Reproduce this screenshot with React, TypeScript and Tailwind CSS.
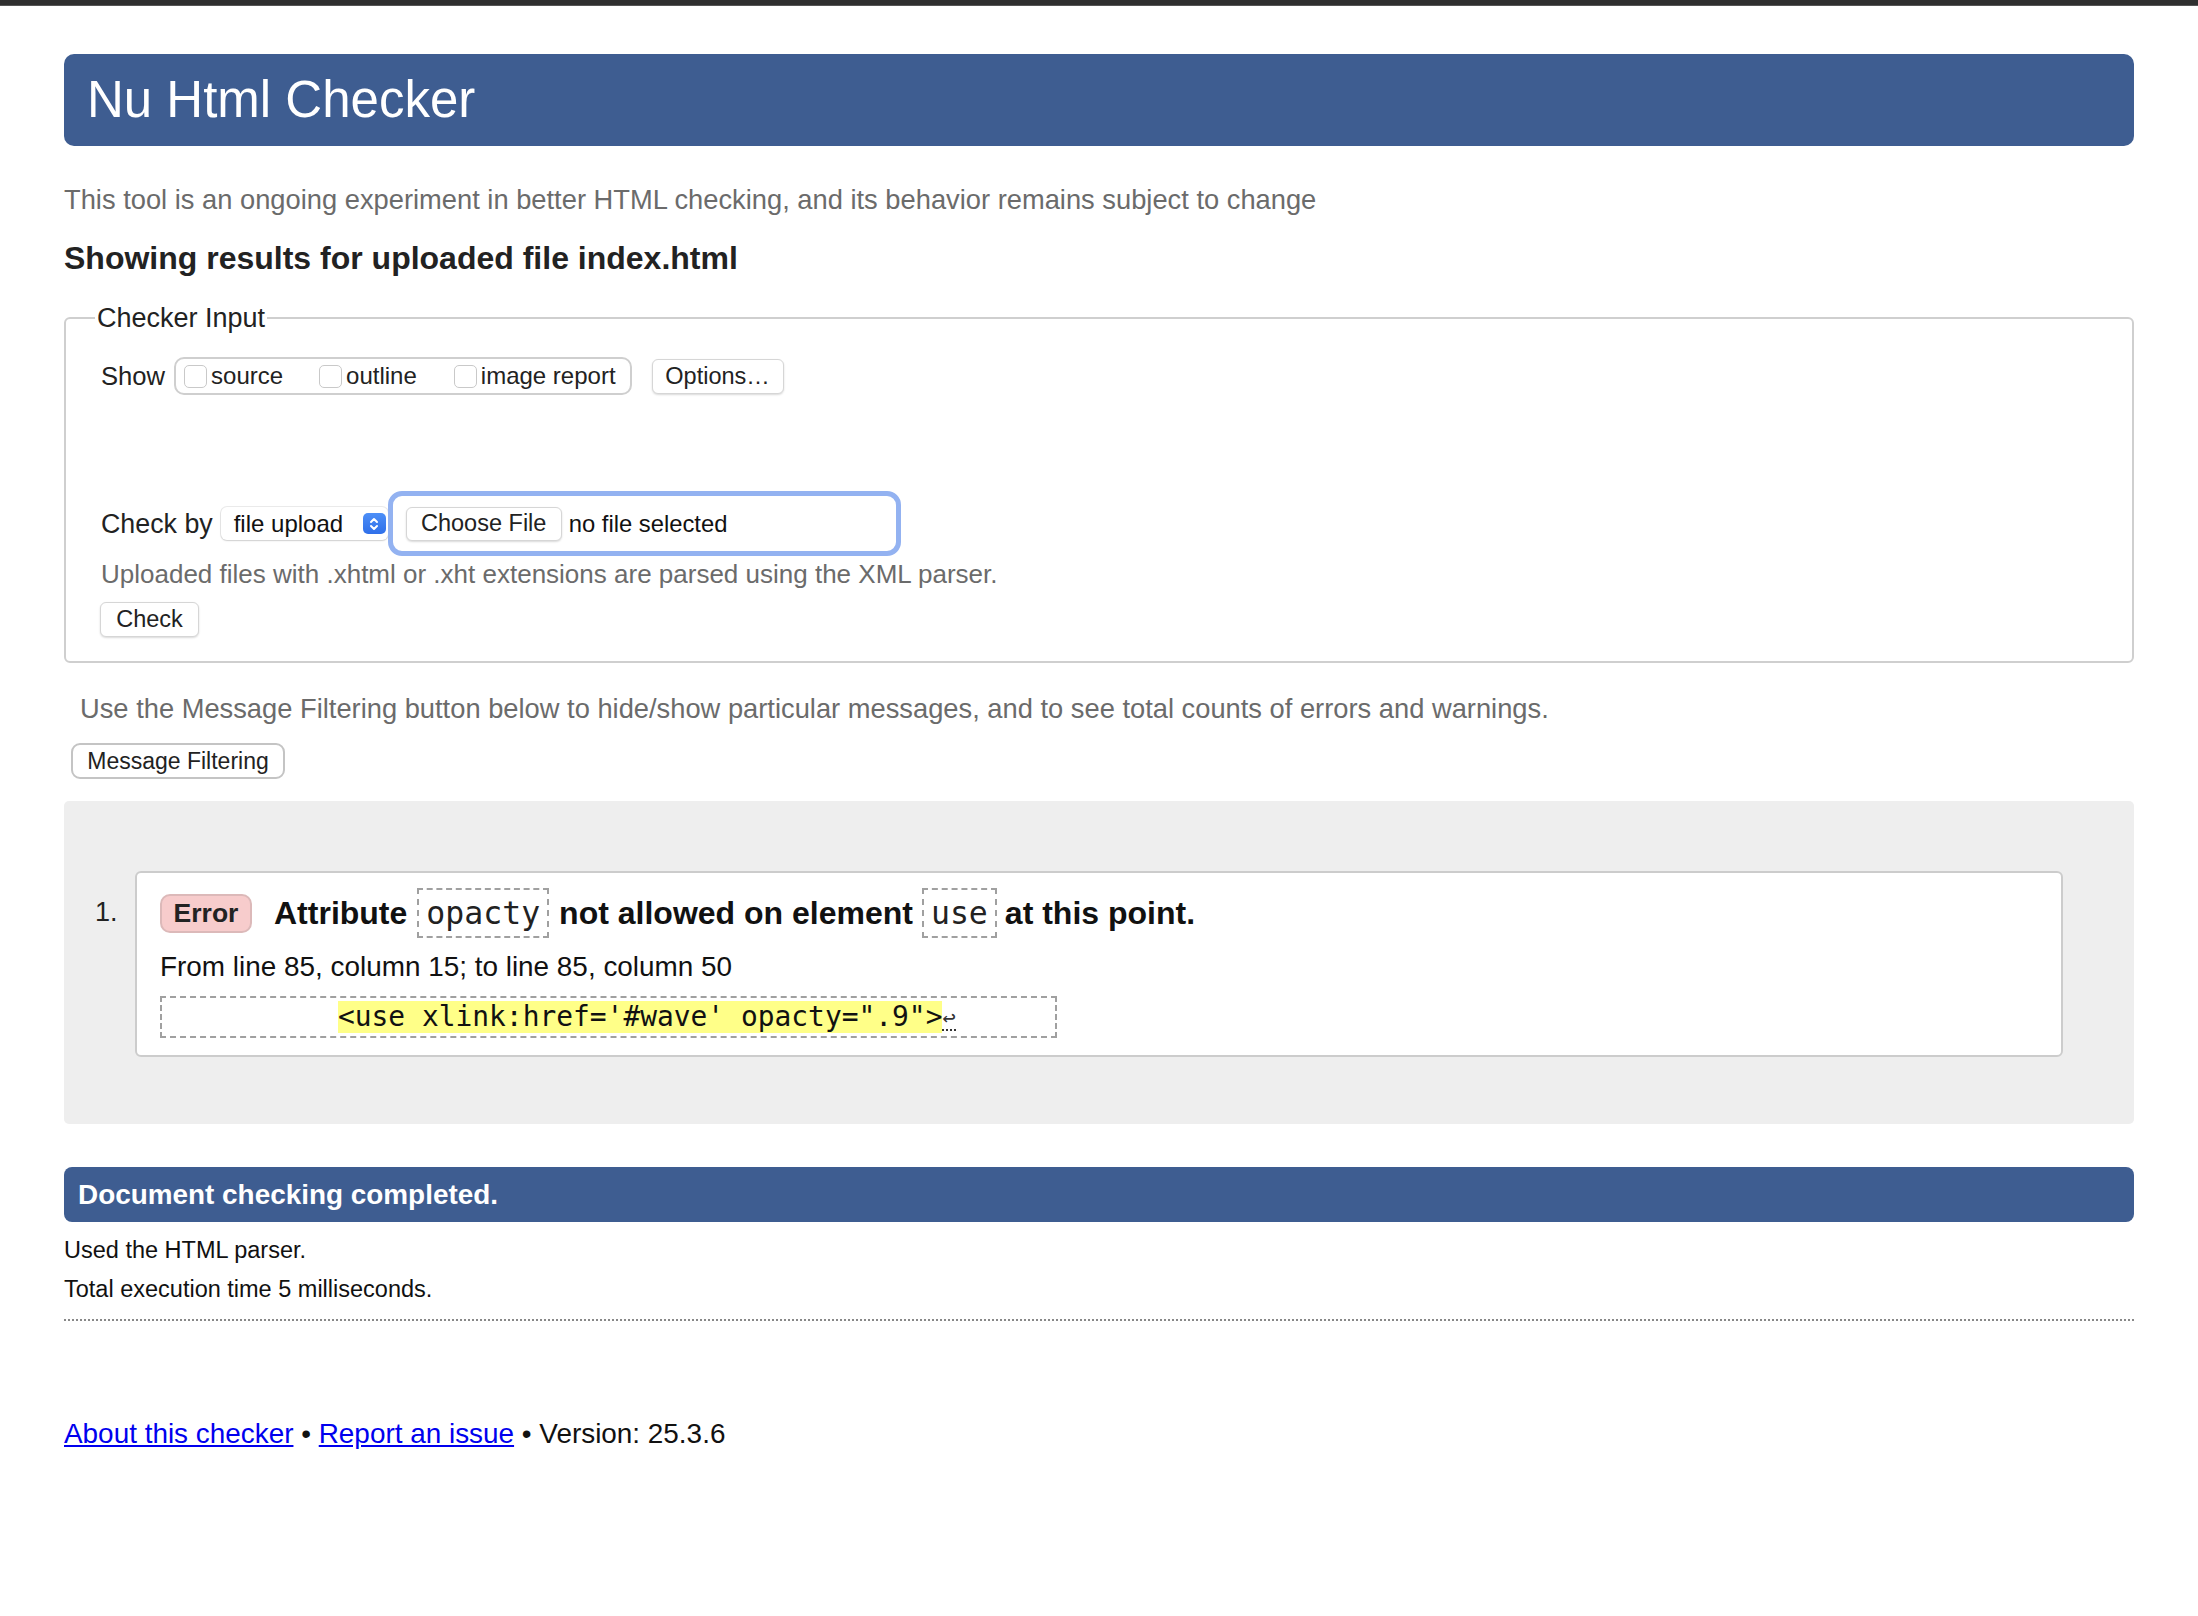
import React from "react";

const SANS = "font-['Liberation_Sans','Helvetica_Neue',Arial,sans-serif]";
const MONO = "font-['DejaVu_Sans_Mono','Liberation_Mono',monospace]";

function Checkbox({ label }: { label: string }) {
  return (
    <label className="flex items-center">
      <span className="h-[23px] w-[23px] rounded-[5px] border-[1.5px] border-[#c9c9c9] bg-white" />
      <span className="ml-[4px] text-[24px] text-[#222]">{label}</span>
    </label>
  );
}

function Btn({ children, className = "" }: { children: React.ReactNode; className?: string }) {
  return (
    <button
      className={
        "flex items-center justify-center rounded-[6px] border border-[#d6d6d6] bg-white text-[23.5px] text-[#222] shadow-[0_1px_2px_rgba(0,0,0,0.15)] " +
        className
      }
    >
      {children}
    </button>
  );
}

function Code({ children }: { children: React.ReactNode }) {
  return (
    <code
      className={
        MONO +
        " inline-flex h-[50px] items-center border-2 border-dashed border-[#a0a0a0] px-[7px] text-[31.5px] font-normal text-[#222]"
      }
    >
      {children}
    </code>
  );
}

export default function App() {
  return (
    <div className={SANS + " min-h-[1616px] bg-white text-[#222]"}>
      {/* window edge */}
      <div className="h-[6px] border-b border-[#555] bg-[#2f2f2f]" />

      <div className="px-[64px]">
        <h1 className="mt-[48px] flex h-[92px] items-center rounded-[10px] bg-[#3e5d91] pl-[23px] text-[51px] font-normal text-white">
          Nu Html Checker
        </h1>

        <p className="mt-[38px] text-[27.3px] leading-[32px] text-[#6b6b6b]">
          This tool is an ongoing experiment in better HTML checking, and its behavior remains subject to change
        </p>

        <h2 className="mt-[23px] text-[32px] font-bold leading-[38px] text-[#222]">
          Showing results for uploaded file index.html
        </h2>

        {/* Checker input */}
        <fieldset className="mt-[25px] rounded-[6px] border-2 border-[#cfcfcf] pb-[24px] pl-[35px]">
          <legend className="ml-[-6px] px-[2px] text-[27px] leading-[32px]">Checker Input</legend>

          <div className="mt-[23px] flex items-center">
            <span className="text-[25.6px]">Show</span>
            <div className="ml-[9px] flex h-[38px] items-center rounded-[10px] border-2 border-[#cfcfcf] pl-[8px] pr-[14px]">
              <Checkbox label="source" />
              <div className="w-[36px]" />
              <Checkbox label="outline" />
              <div className="w-[37px]" />
              <Checkbox label="image report" />
            </div>
            <Btn className="ml-[20px] h-[35px] w-[132px]">Options…</Btn>
          </div>

          <div className="mt-[96px] flex items-center">
            <span className="text-[26.8px]">Check by</span>
            <div className="ml-[8px] flex h-[33px] w-[167px] items-center justify-between rounded-[6px] bg-white pl-[13px] pr-[2px] shadow-[0_0_0_1px_rgba(0,0,0,0.08),0_1px_2px_rgba(0,0,0,0.12)]">
              <span className="text-[24px] text-[#111]">file upload</span>
              <span className="flex h-[21px] w-[23px] items-center justify-center rounded-[5px] bg-gradient-to-b from-[#4d8ff7] to-[#2f6fe9]">
                <svg width="12" height="16" viewBox="0 0 12 16" fill="none" stroke="white" strokeWidth="2" strokeLinecap="round" strokeLinejoin="round">
                  <path d="M3 6l3-3 3 3" />
                  <path d="M3 10l3 3 3-3" />
                </svg>
              </span>
            </div>
            <div className="flex h-[65px] w-[513px] items-center rounded-[14px] border-[5px] border-[#93b2f1] pl-[13px]">
              <Btn className="h-[34px] w-[156px]">Choose File</Btn>
              <span className="ml-[7px] text-[23.8px] text-[#111]">no file selected</span>
            </div>
          </div>

          <p className="mt-[3px] text-[26px] leading-[30px] text-[#6b6b6b]">
            Uploaded files with .xhtml or .xht extensions are parsed using the XML parser.
          </p>

          <Btn className="ml-[-1px] mt-[13px] h-[35px] w-[99px]">Check</Btn>
        </fieldset>

        <p className="mt-[31px] pl-[16px] text-[27.3px] leading-[30px] text-[#6b6b6b]">
          Use the Message Filtering button below to hide/show particular messages, and to see total counts of errors and warnings.
        </p>

        <button className="ml-[7px] mt-[19px] flex h-[36px] w-[214px] items-center justify-center rounded-[9px] border-2 border-[#c4c4c4] bg-white text-[23px] text-[#222]">
          Message Filtering
        </button>

        {/* Results */}
        <div className="mt-[22px] flex items-start rounded-[5px] bg-[#eeeeee] pb-[67px] pl-[31px] pr-[71px] pt-[70px]">
          <div className="w-[40px] pt-[25px] text-[27px] leading-[32px] text-[#222]">1.</div>
          <div className="flex-1 rounded-[6px] border-2 border-[#cccccc] bg-white pb-[17px] pl-[23px] pt-[15px]">
            <div className="flex h-[50px] items-center text-[32px] font-bold text-[#111]">
              <span className="flex h-[39px] w-[92px] items-center justify-center rounded-[10px] border-2 border-[#dcb9b9] bg-[#f7cccc] text-[26.5px] font-bold text-[#222]">
                Error
              </span>
              <span className="ml-[22px]">Attribute</span>
              <span className="ml-[10px]">
                <Code>opacty</Code>
              </span>
              <span className="ml-[10px]">not allowed on element</span>
              <span className="ml-[9px]">
                <Code>use</Code>
              </span>
              <span className="ml-[8px]">at this point.</span>
            </div>

            <p className="mt-[13px] text-[27.9px] leading-[32px] text-[#111]">
              From line 85, column 15; to line 85, column 50
            </p>

            <div
              className={
                MONO +
                " mt-[13px] flex h-[42px] w-[897px] items-center border-2 border-dashed border-[#a0a0a0] pl-[8px] text-[27.9px] text-[#111]"
              }
            >
              <span className="whitespace-pre">{"          "}</span>
              <span className="whitespace-pre bg-[#ffff88] leading-[32px]">{`<use xlink:href='#wave' opacty=".9">`}</span>
              <span className="mt-[4px] border-b-2 border-dotted border-[#333] text-[22px] leading-[22px] text-[#333]">↩</span>
            </div>
          </div>
        </div>

        {/* Status */}
        <div className="mt-[43px] flex h-[55px] items-center rounded-[8px] bg-[#3e5d91] pl-[14px] text-[27.9px] font-bold text-white">
          Document checking completed.
        </div>

        <p className="mt-[14px] text-[23.5px] leading-[28px] text-[#111]">Used the HTML parser.</p>
        <p className="mt-[11px] text-[23.5px] leading-[28px] text-[#111]">Total execution time 5 milliseconds.</p>

        <div className="mt-[16px] border-t-2 border-dotted border-[#888]" />

        <p className="mt-[96px] text-[27.9px] leading-[33px] text-[#111]">
          <a href="#" className="text-[#0000ee] underline">About this checker</a>
          {" • "}
          <a href="#" className="text-[#0000ee] underline">Report an issue</a>
          {" • Version: 25.3.6"}
        </p>
      </div>
    </div>
  );
}
